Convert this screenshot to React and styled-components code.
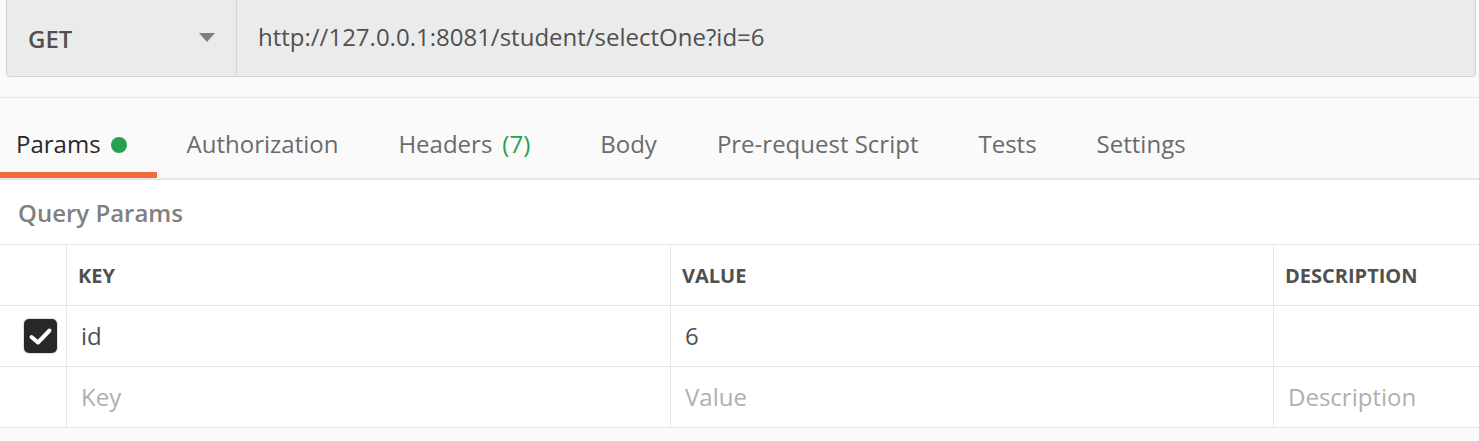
import React from "react";
import styled, { createGlobalStyle } from "styled-components";

const GlobalStyle = createGlobalStyle`
  body {
    margin: 0;
    background-color: #fafafa;
    font-family: "Open Sans", "Noto Sans", sans-serif;
  }
`;

const tabs = [
  { label: "Params", active: true, dot: true },
  { label: "Authorization" },
  { label: "Headers", count: 7 },
  { label: "Body" },
  { label: "Pre-request Script" },
  { label: "Tests" },
  { label: "Settings" },
];

const params = [{ key: "id", value: "6", description: "", checked: true }];

export default function App() {
  return (
    <Page>
      <GlobalStyle />
      <RequestBar>
        <MethodSelect>
          <Method>GET</Method>
          <Caret />
        </MethodSelect>
        <UrlInput>http://127.0.0.1:8081/student/selectOne?id=6</UrlInput>
      </RequestBar>

      <TabBar>
        {tabs.map((t) => (
          <Tab key={t.label} $active={t.active} $first={t.label === "Params"}>
            {t.label}
            {t.dot && <Dot />}
            {t.count !== undefined && <Count>({t.count})</Count>}
          </Tab>
        ))}
      </TabBar>

      <Content>
        <SectionTitle>Query Params</SectionTitle>
        <Table>
          <Row>
            <Cell />
            <HeadCell>Key</HeadCell>
            <HeadCell>Value</HeadCell>
            <HeadCell>Description</HeadCell>
          </Row>
          {params.map((p) => (
            <Row key={p.key}>
              <CheckCell>
                <Checkbox>
                  <svg width="33" height="34" viewBox="0 0 33 34">
                    <path
                      d="M7.5 18 L14 23.5 L25.5 11.5"
                      fill="none"
                      stroke="#ffffff"
                      strokeWidth="4"
                      strokeLinecap="round"
                      strokeLinejoin="round"
                    />
                  </svg>
                </Checkbox>
              </CheckCell>
              <BodyCell>{p.key}</BodyCell>
              <BodyCell>{p.value}</BodyCell>
              <BodyCell>{p.description}</BodyCell>
            </Row>
          ))}
          <Row>
            <Cell />
            <BodyCell $placeholder>Key</BodyCell>
            <BodyCell $placeholder>Value</BodyCell>
            <BodyCell $placeholder>Description</BodyCell>
          </Row>
        </Table>
      </Content>
    </Page>
  );
}

const Page = styled.div`
  width: 1479px;
  height: 441px;
  overflow: hidden;
  background-color: #fafafa;
`;

const RequestBar = styled.div`
  display: flex;
  height: 81px;
  margin: -4px 3px 0 6px;
  box-sizing: border-box;
  background-color: #ebebeb;
  border: 1px solid #d2d2d2;
  border-radius: 4px;
`;

const MethodSelect = styled.div`
  width: 230px;
  box-sizing: border-box;
  display: flex;
  align-items: center;
  justify-content: space-between;
  padding: 4px 21px 0 21px;
  border-right: 1px solid #d6d6d6;
`;

const Method = styled.span`
  font-size: 24px;
  font-weight: 600;
  color: #505050;
`;

const Caret = styled.span`
  width: 0;
  height: 0;
  margin-top: -2px;
  border-left: 8px solid transparent;
  border-right: 8px solid transparent;
  border-top: 9px solid #808080;
`;

const UrlInput = styled.div`
  display: flex;
  align-items: center;
  padding: 0 0 0 21px;
  font-size: 24px;
  color: #505050;
`;

const TabBar = styled.div`
  display: flex;
  margin-top: 20px;
  border-top: 1px solid #e6e6e6;
  border-bottom: 2px solid #e6e6e6;
`;

const Tab = styled.div`
  display: flex;
  align-items: flex-start;
  height: 80px;
  box-sizing: border-box;
  padding: 31px 30px 0 ${(p) => (p.$first ? "16px" : "30px")};
  font-size: 24px;
  line-height: 30px;
  color: ${(p) => (p.$active ? "#282828" : "#6b6b6b")};
  border-bottom: 6px solid ${(p) => (p.$active ? "#f26b3a" : "transparent")};
`;

const Dot = styled.span`
  width: 16px;
  height: 16px;
  margin: 8px 0 0 10px;
  border-radius: 50%;
  background-color: #26a150;
`;

const Count = styled.span`
  margin: 0 10px 0 10px;
  color: #26a150;
`;

const Content = styled.div`
  background-color: #ffffff;
`;

const SectionTitle = styled.div`
  height: 64px;
  box-sizing: border-box;
  padding: 19px 0 0 18px;
  font-size: 24px;
  line-height: 28px;
  font-weight: 600;
  color: #808080;
`;

const Table = styled.div`
  border-top: 1px solid #e6e6e6;
`;

const Row = styled.div`
  display: grid;
  grid-template-columns: 66px 604px 603px 1fr;
  height: 61px;
  box-sizing: border-box;
  border-bottom: 1px solid #e6e6e6;
`;

const Cell = styled.div`
  display: flex;
  align-items: center;
  & + & {
    border-left: 1px solid #e6e6e6;
  }
`;

const HeadCell = styled(Cell)`
  padding-left: 11px;
  font-size: 20px;
  font-weight: 700;
  text-transform: uppercase;
  color: #505050;
`;

const BodyCell = styled(Cell)`
  padding-left: 14px;
  font-size: 24px;
  line-height: 30px;
  color: ${(p) => (p.$placeholder ? "#b0b0b0" : "#505050")};
`;

const CheckCell = styled(Cell)`
  padding-left: 24px;
`;

const Checkbox = styled.span`
  display: flex;
  width: 33px;
  height: 34px;
  border-radius: 5px;
  background-color: #282828;
  box-shadow: 0 0 0 1px #e2e2e2;
`;
